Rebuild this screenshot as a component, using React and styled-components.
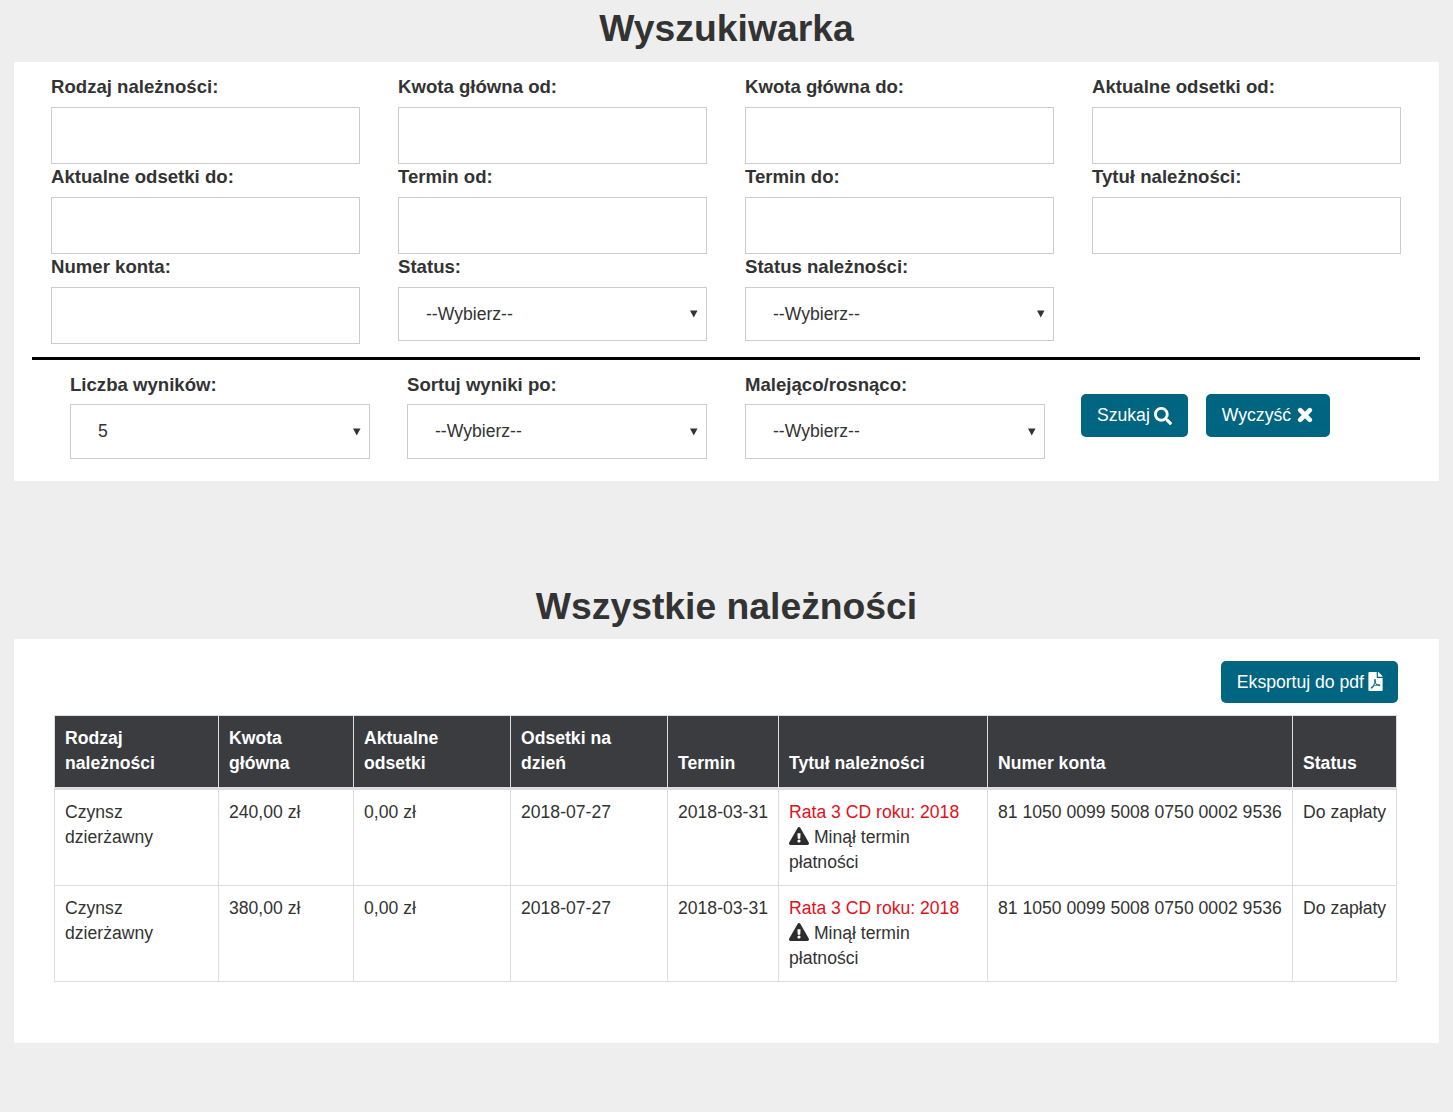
import React from "react";
import styled, { createGlobalStyle } from "styled-components";
import { FaSearch, FaFilePdf, FaExclamationTriangle } from "react-icons/fa";

const Global = createGlobalStyle`
  html, body { margin: 0; padding: 0; background: #eeeeee; }
  body {
    font-family: "Liberation Sans", Arial, sans-serif;
    font-size: 17.6px;
    line-height: 1.42857;
    color: #333333;
  }
  * { box-sizing: border-box; }
`;

const Page = styled.main`
  padding: 0 14px 69px;
`;

const Title = styled.h1`
  margin: ${(p) => (p.$second ? "97px" : "0")} 0 0;
  height: ${(p) => (p.$second ? 61 : 62)}px;
  font-size: 37.3px;
  line-height: 56px;
  font-weight: 700;
  text-align: center;
  color: #333333;
`;

const Card = styled.section`
  background: #ffffff;
  border-radius: 2px;
`;

const SearchCard = styled(Card)`
  padding: 12px 19px 22px 18px;
  height: 419px;
`;

const FieldGrid = styled.div`
  display: grid;
  grid-template-columns: repeat(4, 309px);
  column-gap: 38px;
  grid-auto-rows: 90px;
  padding-left: 19px;
`;

const Field = styled.div`
  display: flex;
  flex-direction: column;
`;

const Label = styled.label`
  display: block;
  height: 25px;
  margin-bottom: 8px;
  font-size: 18.6px;
  font-weight: 700;
  line-height: 25px;
`;

const TextInput = styled.input`
  display: block;
  width: 100%;
  height: 57px;
  border: 1px solid #cccccc;
  background: #ffffff;
`;

const Select = styled.select`
  display: block;
  width: 100%;
  height: ${(p) => p.$h || 54}px;
  padding: ${(p) => (p.$h ? 0 : 2)}px 24px 0 27px;
  border: 1px solid #cccccc;
  border-radius: 0;
  appearance: none;
  font: inherit;
  color: #333333;
  background: #ffffff url("data:image/svg+xml,%3Csvg xmlns='http://www.w3.org/2000/svg' width='8' height='8'%3E%3Cpath d='M0 0.5h7.5L3.75 7.5z' fill='%23333'/%3E%3C/svg%3E") no-repeat right 8px center;
`;

const Rule = styled.hr`
  height: 3px;
  margin: 13px 0 12px;
  border: 0;
  background: #000000;
`;

const FilterRow = styled.div`
  display: flex;
  align-items: flex-start;
  padding-left: 38px;
`;

const FilterField = styled.div`
  width: 300px;
  margin-right: ${(p) => p.$gap}px;
`;

const FilterLabel = styled(Label)`
  margin-bottom: 7px;
`;

const Actions = styled.div`
  display: flex;
  gap: 18px;
  margin-top: 22px;
`;

const Button = styled.button`
  display: inline-flex;
  align-items: center;
  gap: 4px;
  height: ${(p) => p.$h || 43}px;
  padding: ${(p) => (p.$h ? "1px" : "0")} 16px 0;
  border: 0;
  border-radius: 5px;
  background: #006580;
  color: #ffffff;
  font: inherit;
  white-space: nowrap;
  svg { flex: none; }
`;

const ClearIcon = styled.svg`
  width: 16px;
  height: 16px;
  margin-left: 2px;
  margin-right: 1px;
  margin-top: -2px;
`;

const PdfIcon = styled(FaFilePdf)`
  width: 15px;
  height: 19px;
  margin-right: -1px;
  margin-top: -2px;
`;

const TableCard = styled(Card)`
  padding: 22px 42px 61px 40px;
`;

const ExportBar = styled.div`
  display: flex;
  justify-content: flex-end;
  margin: 0 -1px 12px 0;
`;

const Table = styled.table`
  width: 1343px;
  table-layout: fixed;
  border-collapse: separate;
  border-spacing: 0;
  border-top: 1px solid #dddddd;
  border-left: 1px solid #dddddd;
`;

const HeadCell = styled.th`
  padding: 10px 10px 10.3px;
  background: #3b3c40;
  color: #ffffff;
  font-weight: 700;
  text-align: left;
  vertical-align: bottom;
  border-right: 1px solid #dddddd;
  border-bottom: 3px solid #dddddd;
`;

const Cell = styled.td`
  padding: 10px;
  vertical-align: top;
  border-right: 1px solid #dddddd;
  border-bottom: 1px solid #dddddd;
  white-space: ${(p) => (p.$nowrap ? "nowrap" : "normal")};
`;

const Overdue = styled.span`
  color: #e0121a;
`;

const WarnIcon = styled(FaExclamationTriangle)`
  font-size: 20px;
  vertical-align: -3px;
  color: #2d2d2d;
`;

const fieldsTop = [
  "Rodzaj należności:", "Kwota główna od:", "Kwota główna do:", "Aktualne odsetki od:",
  "Aktualne odsetki do:", "Termin od:", "Termin do:", "Tytuł należności:",
];

const columns = [
  { w: 164, t: ["Rodzaj", "należności"] },
  { w: 135, t: ["Kwota", "główna"] },
  { w: 157, t: ["Aktualne", "odsetki"] },
  { w: 157, t: ["Odsetki na", "dzień"] },
  { w: 111, t: ["Termin"] },
  { w: 209, t: ["Tytuł należności"] },
  { w: 305, t: ["Numer konta"] },
  { w: 104, t: ["Status"] },
];

const rows = ["240,00 zł", "380,00 zł"];

function Choice({ label, value = "--Wybierz--", Wrap = Field, Lab = Label, h, gap }) {
  return (
    <Wrap $gap={gap}>
      <Lab>{label}</Lab>
      <Select $h={h} defaultValue={value}>
        <option>{value}</option>
      </Select>
    </Wrap>
  );
}

export default function App() {
  return (
    <Page>
      <Global />
      <Title>Wyszukiwarka</Title>
      <SearchCard>
        <FieldGrid>
          {fieldsTop.map((f) => (
            <Field key={f}>
              <Label>{f}</Label>
              <TextInput type="text" />
            </Field>
          ))}
          <Field>
            <Label>Numer konta:</Label>
            <TextInput type="text" />
          </Field>
          <Choice label="Status:" />
          <Choice label="Status należności:" />
        </FieldGrid>
        <Rule />
        <FilterRow>
          <Choice label="Liczba wyników:" value="5" Wrap={FilterField} Lab={FilterLabel} h={55} gap={37} />
          <Choice label="Sortuj wyniki po:" Wrap={FilterField} Lab={FilterLabel} h={55} gap={38} />
          <Choice label="Malejąco/rosnąco:" Wrap={FilterField} Lab={FilterLabel} h={55} gap={36} />
          <Actions>
            <Button>Szukaj <FaSearch size={18} /></Button>
            <Button>
              Wyczyść
              <ClearIcon viewBox="0 0 16 16">
                <path d="M3.2 3.2 12.8 12.8M12.8 3.2 3.2 12.8" stroke="#ffffff" strokeWidth="4.6" strokeLinecap="round" fill="none" />
              </ClearIcon>
            </Button>
          </Actions>
        </FilterRow>
      </SearchCard>

      <Title $second>Wszystkie należności</Title>
      <TableCard>
        <ExportBar>
          <Button $h={42}>Eksportuj do pdf <PdfIcon /></Button>
        </ExportBar>
        <Table>
          <colgroup>
            {columns.map((c, i) => <col key={i} width={c.w} />)}
          </colgroup>
          <thead>
            <tr>
              {columns.map((c) => (
                <HeadCell key={c.t[0]}>
                  {c.t.map((line, i) => <React.Fragment key={line}>{i > 0 && <br />}{line}</React.Fragment>)}
                </HeadCell>
              ))}
            </tr>
          </thead>
          <tbody>
            {rows.map((amount) => (
              <tr key={amount}>
                <Cell>Czynsz dzierżawny</Cell>
                <Cell>{amount}</Cell>
                <Cell>0,00 zł</Cell>
                <Cell>2018-07-27</Cell>
                <Cell>2018-03-31</Cell>
                <Cell>
                  <Overdue>Rata 3 CD roku: 2018</Overdue>
                  <br />
                  <WarnIcon /> Minął termin płatności
                </Cell>
                <Cell $nowrap>81 1050 0099 5008 0750 0002 9536</Cell>
                <Cell $nowrap>Do zapłaty</Cell>
              </tr>
            ))}
          </tbody>
        </Table>
      </TableCard>
    </Page>
  );
}
